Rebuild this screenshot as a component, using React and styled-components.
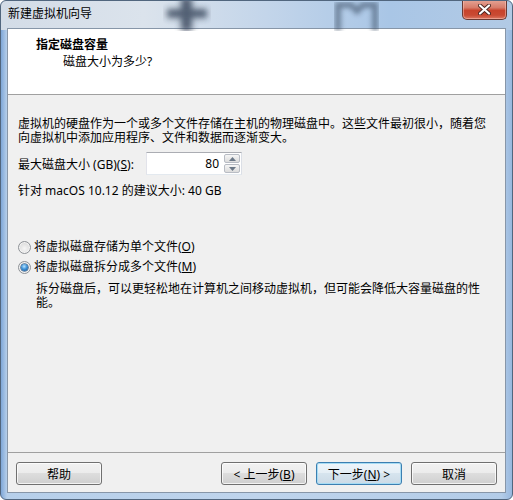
import styled, { createGlobalStyle } from 'styled-components';

const GlobalStyle = createGlobalStyle`
	html, body {
		margin: 0;
		padding: 0;
		width: 513px;
		height: 500px;
		overflow: hidden;
		background: #ffffff;
	}

	body {
		font-family: "Noto Sans", "Noto Sans CJK SC", sans-serif;
		font-size: 12px;
		color: #000000;
	}
`;

const Window = styled.div`
	position: relative;
	box-sizing: border-box;
	width: 513px;
	height: 500px;
	display: flex;
	flex-direction: column;
	padding: 0 6px 6px 6px;
	border: 1px solid #51667e;
	border-radius: 6px;
	background:
		linear-gradient(90deg, #d3dce7 0%, #dbe3ec 28%, #c3d5ea 52%, #a9c6e6 76%, #b2cae5 100%) top / 100% 29px no-repeat,
		linear-gradient(90deg, #7fa7d8 0px, #b6cfea 6px, #bfd4ec 50%, #b3cce8 98%, #98b8de 100%);
	overflow: hidden;
`;

const Glass = styled.svg`
	position: absolute;
	top: 0;
	left: 0;
	pointer-events: none;
`;

const TitleBar = styled.div`
	position: relative;
	height: 27px;
	display: flex;
	align-items: flex-start;
	justify-content: space-between;
`;

const Caption = styled.span`
	padding: 4px 0 0 1px;
	line-height: 16px;
	font-family: "Noto Sans CJK SC", sans-serif;
`;

const CloseButton = styled.div`
	box-sizing: border-box;
	width: 45px;
	height: 20px;
	margin: -1px -1px 0 0;
	display: flex;
	align-items: center;
	justify-content: center;
	border: 1px solid #6a3a34;
	border-top: none;
	border-radius: 0 0 5px 5px;
	background: linear-gradient(180deg, #e6a596 0%, #d77c6a 40%, #c8432c 55%, #c94a33 80%, #dc7863 100%);
	box-shadow: inset 0 0 0 1px rgba(255, 210, 200, 0.45);
`;

const Client = styled.div`
	flex: 1;
	display: flex;
	flex-direction: column;
	border: 1px solid #8796a8;
	background: #f0f0f0;
`;

const Header = styled.div`
	height: 57px;
	padding: 8px 0 0 28px;
	background: #ffffff;
	border-bottom: 1px solid #a0a0a0;
`;

const HeaderTitle = styled.div`
	line-height: 16px;
	font-weight: bold;
`;

const HeaderSub = styled.div`
	margin-top: 1px;
	padding-left: 27px;
	line-height: 16px;
`;

const Body = styled.div`
	flex: 1;
	display: flex;
	flex-direction: column;
	padding: 22px 0 0 10px;
`;

const Text = styled.div`
	line-height: 14px;
	margin-top: ${(props) => props.$top || 0}px;
	padding-left: ${(props) => props.$indent || 0}px;
	white-space: nowrap;
`;

const SizeRow = styled.div`
	display: flex;
	align-items: center;
	margin-top: 7px;
	height: 23px;
`;

const Label = styled.span`
	width: 128px;
`;

const SpinBox = styled.div`
	box-sizing: border-box;
	width: 96px;
	height: 23px;
	display: flex;
	border: 1px solid;
	border-color: #abadb3 #dbdfe6 #e3e9ef #e2e3ea;
	background: #ffffff;
`;

const SpinValue = styled.div`
	flex: 1;
	text-align: right;
	line-height: 21px;
	padding-right: 5px;
`;

const SpinButtons = styled.div`
	width: 16px;
	display: flex;
	flex-direction: column;
	gap: 1px;
	padding: 1px 1px 1px 0;
`;

const SpinButton = styled.div`
	flex: 1;
	display: flex;
	align-items: center;
	justify-content: center;
	border: 1px solid #b8bcc4;
	border-radius: 2px;
	background: linear-gradient(180deg, #f6f6f6 0%, #e8e8e8 50%, #dcdcdc 100%);
`;

const RadioGroup = styled.div`
	display: flex;
	flex-direction: column;
	gap: 4px;
	margin-top: 41px;
`;

const RadioRow = styled.label`
	display: flex;
	align-items: center;
	gap: 3px;
	height: 16px;
	line-height: 16px;
`;

const Radio = styled.span`
	position: relative;
	box-sizing: border-box;
	width: 13px;
	height: 13px;
	border-radius: 50%;
	border: 1px solid #8e9297;
	background: radial-gradient(circle at 50% 60%, #f6f6f6 0%, #e2e2e2 55%, #cfcfcf 100%);
	box-shadow: inset 0 0 0 1px #f4f4f4;

	&::after {
		content: '';
		display: ${(props) => (props.$checked ? 'block' : 'none')};
		position: absolute;
		left: 2px;
		top: 2px;
		width: 7px;
		height: 7px;
		border-radius: 50%;
		background: radial-gradient(circle at 45% 35%, #b9e4ff 0%, #3f93d8 45%, #124a86 100%);
		box-shadow: 0 0 0 0.5px #0e3a6a;
	}
`;

const Footer = styled.div`
	display: flex;
	padding: 9px 8px 7px 8px;
	border-top: 1px solid #a0a0a0;
`;

const Spacer = styled.div`
	flex: 1;
`;

const Actions = styled.div`
	display: flex;
	gap: 9px;
`;

const Button = styled.button`
	box-sizing: border-box;
	width: 86px;
	height: 23px;
	padding: 0;
	font: inherit;
	font-family: "Noto Sans", "Noto Sans CJK SC", sans-serif;
	font-size: 12px;
	color: #000000;
	border: 1px solid ${(props) => (props.$default ? '#3c7fb1' : '#707070')};
	border-radius: 3px;
	background: ${(props) =>
		props.$default
			? 'linear-gradient(180deg, #eef5fa 0%, #e4eef5 50%, #d6e4ee 50%, #cbdae6 100%)'
			: 'linear-gradient(180deg, #f2f2f2 0%, #ebebeb 50%, #dddddd 50%, #cfcfcf 100%)'};
	box-shadow: inset 0 0 0 1px ${(props) => (props.$default ? '#a6dcf4' : 'rgba(255, 255, 255, 0.75)')};
`;

const Arrow = ({ up }) => (
	<svg width="7" height="4" viewBox="0 0 7 4">
		<polygon
			points={up ? '3.5,0 7,4 0,4' : '0,0 7,0 3.5,4'}
			fill="#6b7887"
		/>
	</svg>
);

function App() {
	return (
		<>
			<GlobalStyle />
			<Window>
				<Glass
					width="513"
					height="30"
				>
					<defs>
						<filter id="blur">
							<feGaussianBlur stdDeviation="3" />
						</filter>
						<filter id="blur-soft">
							<feGaussianBlur stdDeviation="2.5" />
						</filter>
					</defs>
					<g
						filter="url(#blur)"
						fill="#26364b"
						opacity="0.75"
					>
						<rect x="166" y="8" width="40" height="9" />
						<rect x="180" y="-4" width="11" height="34" />
					</g>
					<path
						d="M337 30 V4 H350 L356 10 L362 4 H374 V30"
						fill="none"
						stroke="#34465d"
						strokeWidth="6"
						opacity="0.55"
						filter="url(#blur-soft)"
					/>
				</Glass>
				<TitleBar>
					<Caption>新建虚拟机向导</Caption>
					<CloseButton>
						<svg width="13" height="11" viewBox="0 0 13 11">
							<path d="M2 1.5 L11 9.5 M11 1.5 L2 9.5" stroke="#4b2722" strokeWidth="4" strokeLinecap="round" />
							<path d="M2 1.5 L11 9.5 M11 1.5 L2 9.5" stroke="#ffffff" strokeWidth="2.2" strokeLinecap="round" />
						</svg>
					</CloseButton>
				</TitleBar>
				<Client>
					<Header>
						<HeaderTitle>指定磁盘容量</HeaderTitle>
						<HeaderSub>磁盘大小为多少?</HeaderSub>
					</Header>
					<Body>
						<Text>
							虚拟机的硬盘作为一个或多个文件存储在主机的物理磁盘中。这些文件最初很小，随着您
							<br />
							向虚拟机中添加应用程序、文件和数据而逐渐变大。
						</Text>
						<SizeRow>
							<Label>
								最大磁盘大小 (GB)(<u>S</u>):
							</Label>
							<SpinBox>
								<SpinValue>80</SpinValue>
								<SpinButtons>
									<SpinButton>
										<Arrow up />
									</SpinButton>
									<SpinButton>
										<Arrow />
									</SpinButton>
								</SpinButtons>
							</SpinBox>
						</SizeRow>
						<Text $top={9}>针对 macOS 10.12 的建议大小: 40 GB</Text>
						<RadioGroup>
							<RadioRow>
								<Radio />
								<span>
									将虚拟磁盘存储为单个文件(<u>O</u>)
								</span>
							</RadioRow>
							<RadioRow>
								<Radio $checked />
								<span>
									将虚拟磁盘拆分成多个文件(<u>M</u>)
								</span>
							</RadioRow>
						</RadioGroup>
						<Text
							$top={7}
							$indent={18}
						>
							拆分磁盘后，可以更轻松地在计算机之间移动虚拟机，但可能会降低大容量磁盘的性
							<br />
							能。
						</Text>
					</Body>
					<Footer>
						<Button>帮助</Button>
						<Spacer />
						<Actions>
							<Button>
								&lt; 上一步(<u>B</u>)
							</Button>
							<Button $default>
								下一步(<u>N</u>) &gt;
							</Button>
							<Button>取消</Button>
						</Actions>
					</Footer>
				</Client>
			</Window>
		</>
	);
}

export default App;
